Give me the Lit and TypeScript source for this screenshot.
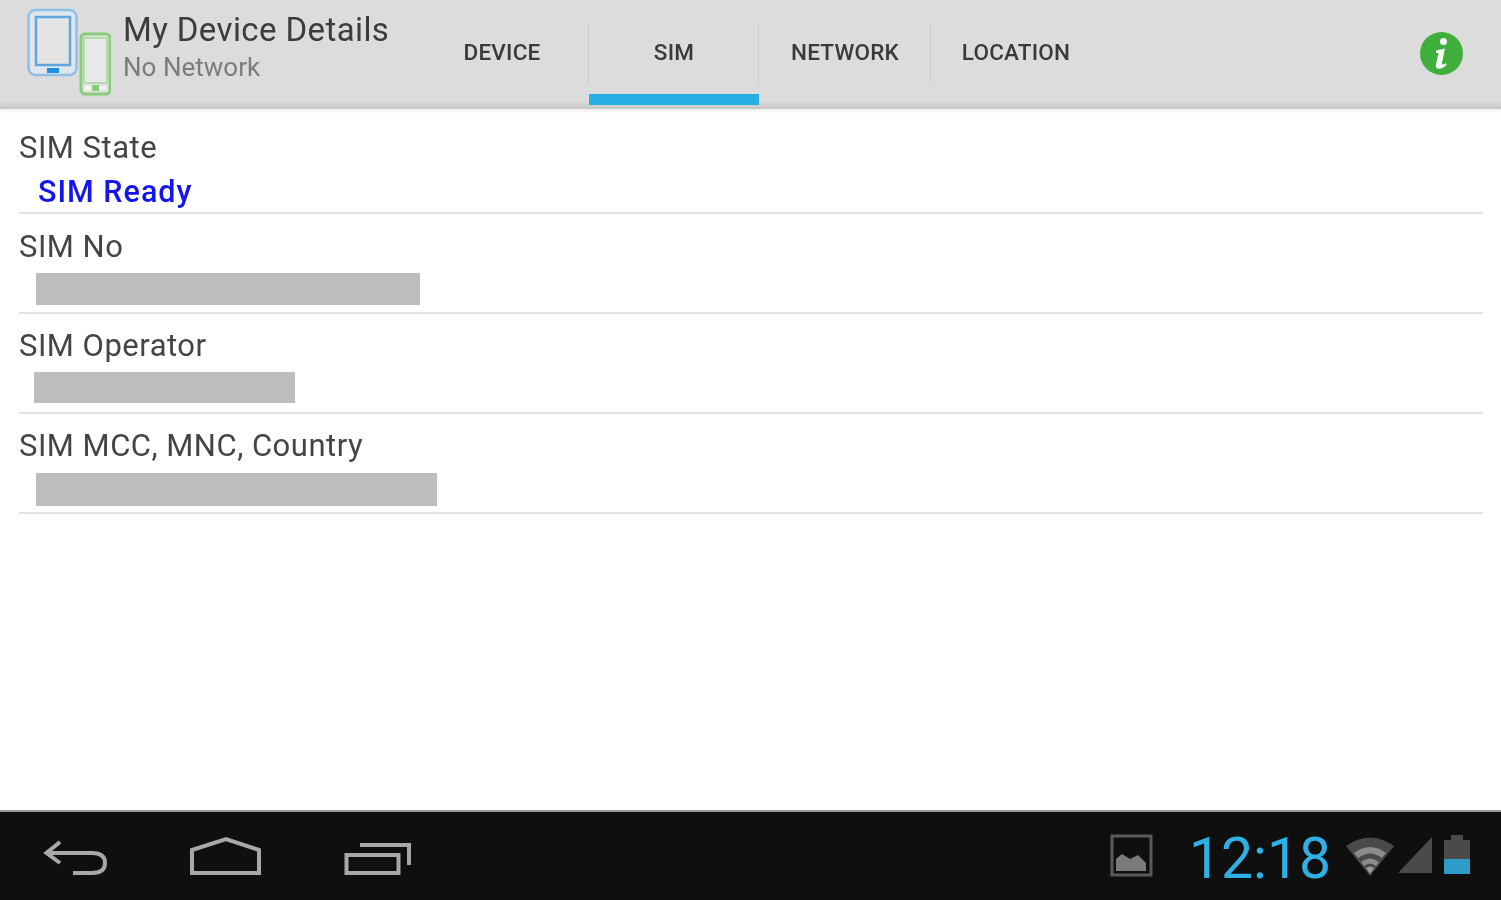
import { LitElement, html, css } from "lit";
import { customElement } from "lit/decorators.js";

const rows = [
  { label: "SIM State", value: "SIM Ready", top: 16 },
  { label: "SIM No", w: 384, ml: 17, h: 32, top: 15, gap: 8 },
  { label: "SIM Operator", w: 261, ml: 15, h: 31, top: 14, gap: 8 },
  { label: "SIM MCC, MNC, Country", w: 401, ml: 17, h: 33, top: 14, gap: 9 },
];

@customElement("app-root")
export class AppRoot extends LitElement {
  static styles = css`
    :host { display: flex; flex-direction: column; width: 1501px; height: 900px; overflow: hidden; background: #fff; font-family: Roboto, "Liberation Sans", sans-serif; filter: blur(.5px); }
    .bar { height: 109px; flex: none; display: flex; align-items: stretch; background: linear-gradient(to bottom, #dcdcdc 101px, #c9c9c9 108px); position: relative; box-shadow: 0 2px 4px rgba(0,0,0,.08); }
    .logo { width: 84px; height: 88px; margin: 8px 0 0 27px; flex: none; }
    .titles { width: 293px; margin-left: 12px; flex: none; padding-top: 10px; }
    .title { font-size: 33px; line-height: 40px; color: #3c3c3c; letter-spacing: .4px; }
    .sub { font-size: 26px; line-height: 32px; color: #7c7c7c; margin-top: 1px; letter-spacing: .02px; }
    .tabs { display: flex; margin-left: -1px; }
    .tab { position: relative; display: flex; justify-content: center; padding-top: 39px; box-sizing: border-box; font-size: 22.5px; line-height: 26px; font-weight: 500; color: #3a3a3a; letter-spacing: .2px; }
    .tab.sep::after { content: ""; position: absolute; right: 0; top: 24px; height: 59px; width: 1px; background: #cbcbcb; }
    .tab.on::before { content: ""; position: absolute; left: 0; right: 0; top: 94px; height: 11px; background: #27aee3; }
    .info { margin: 31px 37px 0 auto; width: 45px; height: 45px; }
    .list { flex: 1; padding: 5px 18px 0 19px; }
    .row { height: 100px; box-sizing: border-box; border-bottom: 2px solid #e2e2e2; }
    .label { font-size: 31px; line-height: 36px; color: #444; letter-spacing: .5px; }
    .value { margin: 8px 0 0 19px; font-size: 30.5px; line-height: 36px; font-weight: 500; color: #1414ee; letter-spacing: 1px; }
    .redact { background: #bdbdbd; }
    .nav { height: 90px; flex: none; display: flex; align-items: center; background: #0f0f0f; border-top: 2px solid #9a9a9a; box-sizing: border-box; color: #aaa; position: relative; }
    .navicons { width: 420px; height: 88px; flex: none; }
    .status { margin-left: auto; display: flex; align-items: center; height: 88px; }
    .clock { font-size: 57px; line-height: 87px; color: #2fb0e4; font-weight: 400; letter-spacing: 0; margin: 4px 0 0 35px; }
    .status svg { display: block; flex: none; }
    .wifi { margin-left: 14px; }
    .battery { margin: 0 30px 0 10px; }
  `;

  logo() {
    return html`<svg class="logo" viewBox="0 0 84 88">
      <rect x="1.5" y="2" width="48" height="65" rx="7" fill="#dfe6ec" stroke="#8fbfe6" stroke-width="2.5"/>
      <rect x="9" y="9" width="34" height="48" fill="#e4e4e4" stroke="#5ea6e0" stroke-width="2.5"/>
      <rect x="20" y="60" width="12" height="5" fill="#1b92e4"/>
      <rect x="54" y="26" width="29" height="60" rx="4" fill="#e0e6df" stroke="#88cc7c" stroke-width="3"/>
      <rect x="57" y="30" width="23" height="45" fill="#e8e8e8" stroke="#a5d69b" stroke-width="1.500"/>
      <rect x="58" y="78" width="6" height="4" fill="#f4f4f4"/>
      <rect x="73" y="78" width="6" height="4" fill="#f4f4f4"/>
      <rect x="65" y="77" width="7" height="6" fill="#88cc7c"/>
    </svg>`;
  }

  info() {
    return html`<svg class="info" viewBox="0 0 45 45">
      <circle cx="22.500" cy="22.500" r="21.500" fill="#3fae3a"/>
      <circle cx="24.500" cy="10.500" r="3.500" fill="#fff"/>
      <path d="M17 19.500 L26 17.500 L23 32 Q23 35 27 32 L27.500 34 Q22 39 18.500 37.500 Q16 36.500 17 33 L19.500 22 L17 22 Z" fill="#f4fbf3"/>
    </svg>`;
  }

  navIcons() {
    return html`<svg class="navicons" viewBox="0 0 420 88" fill="none" stroke="#a8a8a8" stroke-width="4">
      <path d="M60 30 L46.500 41 L60 51 M48 41 H92 Q105 41 105 51 Q105 61 92 61 H73" stroke-linejoin="miter"/>
      <path d="M192 61 V38 L226 27 L259 38 V61 Z" stroke-linejoin="miter"/>
      <rect x="346.500" y="43" width="52" height="18"/>
      <path d="M360 33 H409 V53"/>
    </svg>`;
  }

  render() {
    const tabs = [
      ["DEVICE", 174, true, false],
      ["SIM", 170, true, true],
      ["NETWORK", 172, true, false],
      ["LOCATION", 170, false, false],
    ] as const;
    return html`
      <div class="bar">
        ${this.logo()}
        <div class="titles">
          <div class="title">My Device Details</div>
          <div class="sub">No Network</div>
        </div>
        <div class="tabs">
          ${tabs.map(([t, w, sep, on]) => html`<div class="tab ${sep ? "sep" : ""} ${on ? "on" : ""}" style="width:${w}px">${t}</div>`)}
        </div>
        ${this.info()}
      </div>
      <div class="list">
        ${rows.map((r) => html`<div class="row" style="padding-top:${r.top}px">
          <div class="label">${r.label}</div>
          ${r.value
            ? html`<div class="value">${r.value}</div>`
            : html`<div class="redact" style="width:${r.w}px;height:${r.h}px;margin:${r.gap}px 0 0 ${r.ml}px"></div>`}
        </div>`)}
      </div>
      <div class="nav">
        ${this.navIcons()}
        <div class="status">
          <svg width="44" height="46" viewBox="0 0 44 46">
            <rect x="2" y="3" width="39" height="39" fill="none" stroke="#5a5a5a" stroke-width="3"/>
            <path d="M6 38 V26 L12 21 L20 26 L28 22 L36 30 V38 Z" fill="#7a7a7a"/>
          </svg>
          <div class="clock">12:18</div>
          <svg class="wifi" width="52" height="42" viewBox="0 0 52 42">
            <path d="M1 11 Q25 -6 49 11 L25 41 Z" fill="#4a4a4a"/>
            <path d="M9 18 Q25 6 41 18 L37 23 Q25 14 13 23 Z" fill="#8c8c8c"/>
            <path d="M16 27 Q25 20 34 27 L31 31 Q25 26 19 31 Z" fill="#8c8c8c"/>
            <path d="M21 33 Q25 30 29 33 L25 39 Z" fill="#9a9a9a"/>
          </svg>
          <svg width="36" height="42" viewBox="0 0 36 42">
            <path d="M1 38 L35 2 V38 Z" fill="#4a4a4a"/>
          </svg>
          <svg class="battery" width="28" height="42" viewBox="0 0 28 42">
            <path d="M1 5 H8 V0 H20 V5 H27 V24 H1 Z" fill="#4a4a4a"/>
            <rect x="1" y="24" width="26" height="15" fill="#2e9cc8"/>
          </svg>
        </div>
      </div>
    `;
  }
}
